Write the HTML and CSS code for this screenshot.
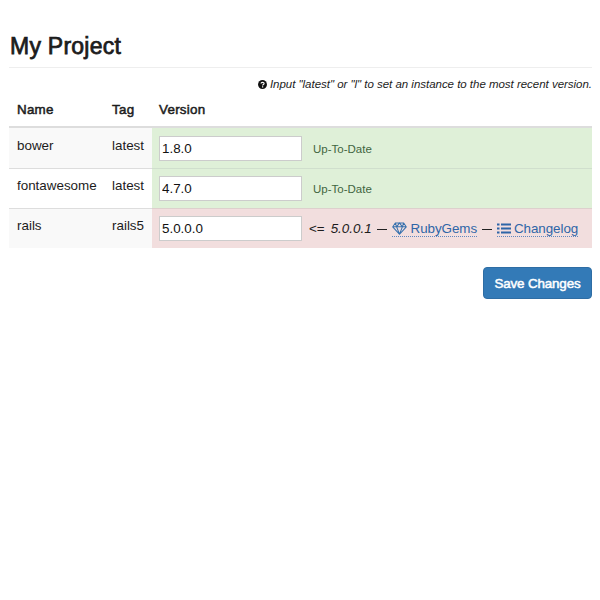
FILE: index.html
```html
<!DOCTYPE html>
<html lang="en">
<head>
<meta charset="utf-8">
<title>My Project</title>
<link rel="stylesheet" href="styles.css">
</head>
<body>
<main>
  <h1><span class="title">My Project</span></h1>
  <p class="hint">
    <svg class="help" viewBox="0 0 16 16"><circle cx="8" cy="8" r="7.9" fill="#111"/><path d="M5.4 6.2C5.5 3.6 10.8 3.4 10.8 6.2 10.8 8 8.2 7.9 8.2 9.8M8.2 11.2v2" fill="none" stroke="#fff" stroke-width="2.1"/></svg>
    <em class="hint-text">Input "latest" or "l" to set an instance to the most recent version.</em>
  </p>
  <table>
    <thead><tr><th class="name"><span>Name</span></th><th class="tag"><span>Tag</span></th><th class="ver"><span>Version</span></th></tr></thead>
    <tbody>
      <tr><td>bower</td><td>latest</td><td class="success"><div class="version"><input type="text" value="1.8.0" aria-label="bower version"><span class="ok">Up-To-Date</span></div></td></tr>
      <tr><td>fontawesome</td><td>latest</td><td class="success"><div class="version"><input type="text" value="4.7.0" aria-label="fontawesome version"><span class="ok">Up-To-Date</span></div></td></tr>
      <tr><td>rails</td><td>rails5</td><td class="danger"><div class="version"><input type="text" value="5.0.0.0" aria-label="rails version"><span class="compare">&lt;=</span><em class="available">5.0.0.1</em><span class="dash"></span><a class="gems" href="#"><svg class="gem" viewBox="0 0 16 14"><path d="M3.5 1h9L15.3 5.2 8 13.2.7 5.2zM.7 5.2h14.6M3.5 1l1.4 4.2L8 13.2l3.1-8L12.5 1M4.9 5.2 8 1l3.1 4.2"/></svg><span>RubyGems</span></a><span class="dash"></span><a class="log" href="#"><svg class="list" viewBox="0 0 14 11"><path d="M0 1.5h2.5M4 1.5h10M0 5.5h2.5M4 5.5h10M0 9.5h2.5M4 9.5h10"/></svg><span>Changelog</span></a></div></td></tr>
    </tbody>
  </table>
  <div class="actions"><button type="button"><span>Save Changes</span></button></div>
</main>
</body>
</html>
```
FILE: styles.css
```css
* { box-sizing: border-box; }
body {
  margin: 0;
  background: #fff;
  color: #1c1c1c;
  font: 13.4px/19px "Liberation Sans", Arial, sans-serif;
}
main { padding: 31px 8px 0 9px; }
h1 {
  margin: 0;
  height: 37px;
  padding-left: 1px;
  border-bottom: 1px solid #eee;
  font-size: 23px;
  line-height: 30px;
  font-weight: 400;
  letter-spacing: .25px;
  -webkit-text-stroke: .75px #1c1c1c;
}
.hint {
  display: flex;
  justify-content: flex-end;
  align-items: center;
  gap: 3px;
  margin: 7px 0 6px;
  height: 18px;
  font-size: 11.5px;
}
.hint-text { letter-spacing: -.025px; }
.help { width: 9px; height: 9px; }
table {
  width: 100%;
  border-collapse: separate;
  border-spacing: 0;
  table-layout: fixed;
}
th, td { text-align: left; vertical-align: top; padding: 8px; }
th {
  height: 29px;
  padding: 1px 8px 0;
  border-bottom: 2px solid #ddd;
  font-weight: 400;
  letter-spacing: .25px;
  -webkit-text-stroke: .5px #1c1c1c;
}
th.ver { padding-left: 7px; }
.name { width: 95px; }
.tag { width: 48px; }
td { height: 40px; padding-bottom: 0; border-top: 1px solid #ddd; }
td:nth-child(-n+2) { padding-top: 7px; }
tbody tr:first-child td { border-top: 0; }
tbody tr:first-child td:nth-child(-n+2) { padding-top: 8px; }
tbody tr:nth-child(odd) { background: #f9f9f9; }
td.success { background: #dff0d8; border-color: #d0dfcd; }
td.danger { background: #f2dede; border-color: #ddd0cd; }
td.success, td.danger { padding: 7px 0 0 7px; }
.version { display: flex; align-items: center; height: 25px; }
input {
  flex: none;
  width: 143px;
  height: 25px;
  padding: 1px 2px;
  border: 1px solid #ccc;
  border-radius: 0;
  background: #fff;
  color: #111;
  font: inherit;
}
tbody tr:first-child .version { margin-top: 1px; }
.ok { margin: 1px 0 0 11px; font-size: 11.5px; color: #3f653f; }
.compare { margin-left: 7px; }
.available { margin-left: 6px; }
.dash { width: 10px; height: 1px; margin: 1px 5px 0; background: #222; }
a {
  display: flex;
  align-items: center;
  height: 16px;
  border-bottom: 1px dotted #5f88c0;
  color: #2e65a7;
  text-decoration: none;
}
.gems, .log { letter-spacing: -.07px; }
svg { flex: none; }
.gem { width: 15px; height: 13px; margin-right: 4px; fill: none; stroke: #3670ad; stroke-width: 1.1; }
.list { width: 14px; height: 11px; margin-right: 3px; fill: none; stroke: #2e65a7; stroke-width: 1.8; }
.actions { display: flex; justify-content: flex-end; margin-top: 19px; }
button {
  width: 109px;
  height: 32px;
  padding: 0;
  border: 1px solid #2e6da4;
  border-radius: 4px;
  background: #337ab7;
  color: #fff;
  font: inherit;
  letter-spacing: -.15px;
  -webkit-text-stroke: .5px #fff;
}
```
